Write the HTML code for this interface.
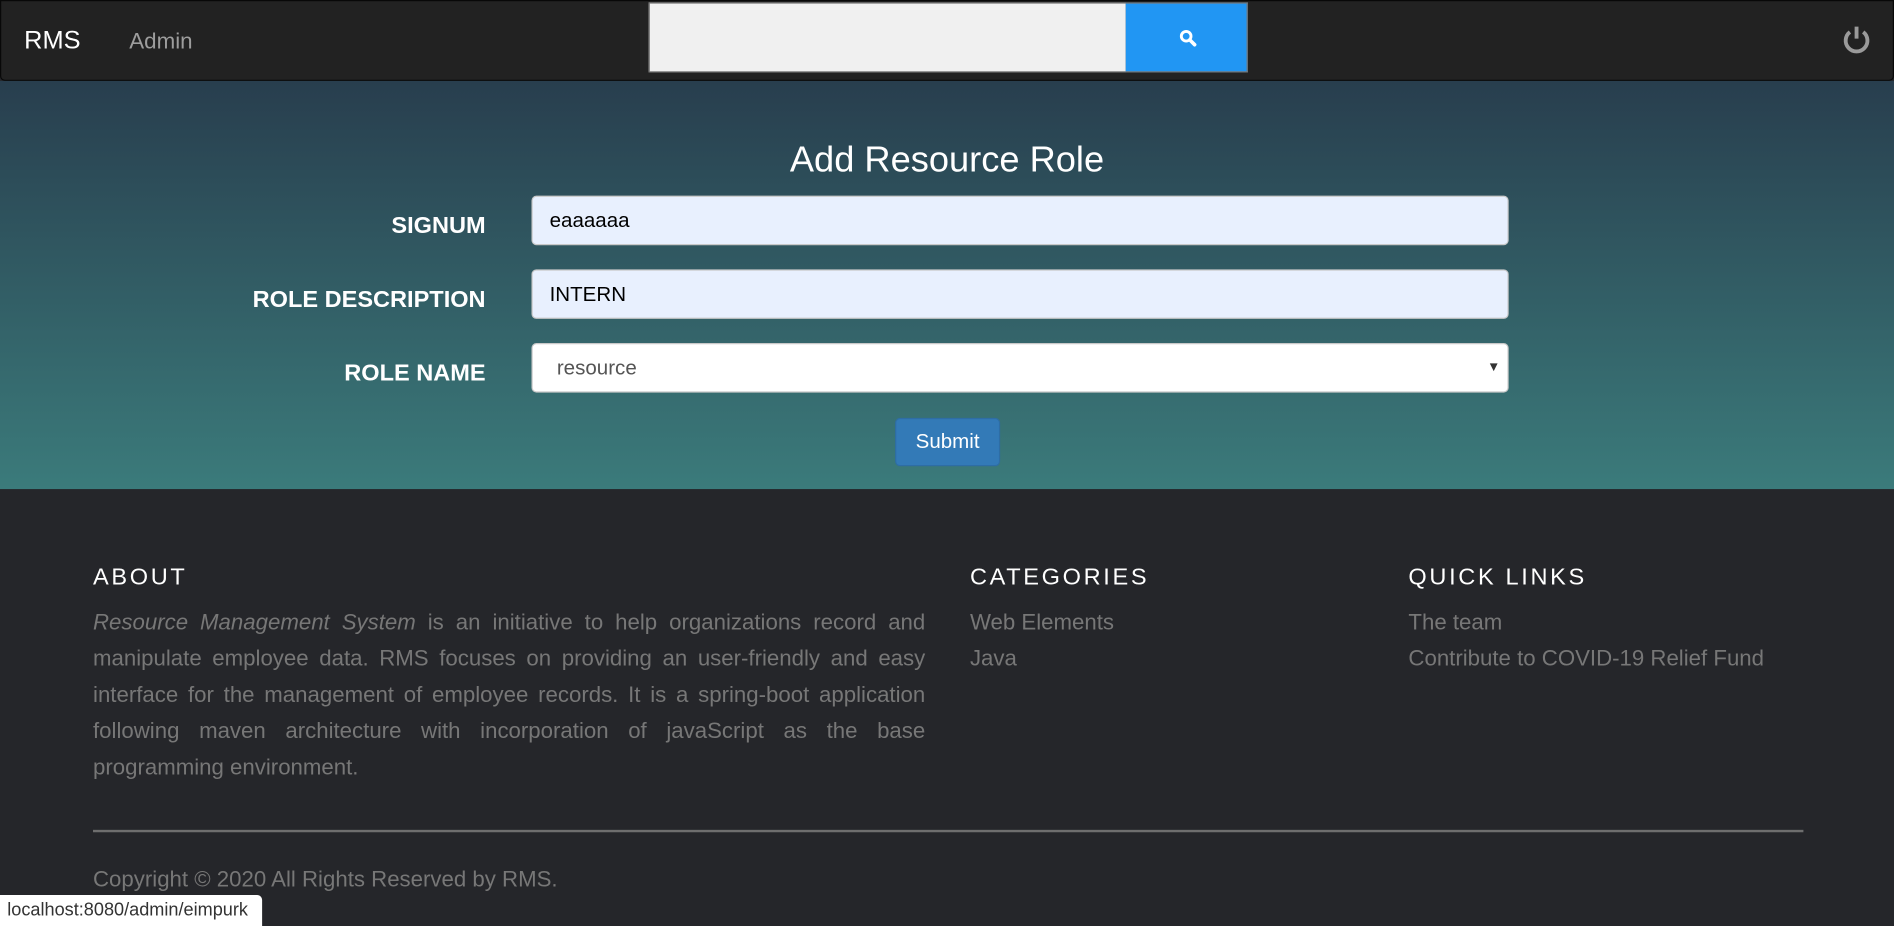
<!DOCTYPE html>
<html><head><meta charset="utf-8"><style>
html,body{margin:0;padding:0;width:1894px;height:926px;overflow:hidden;background:#25262a}
#w{position:absolute;left:0;top:0;width:1568px;height:767px;transform:scale(1.20791);transform-origin:0 0;font-family:"Liberation Sans",Arial,sans-serif;overflow:hidden}
.a{position:absolute}
nav{position:absolute;left:0;top:0;width:1566px;height:65px;background:#222;border:1px solid #080808;border-radius:0 0 4px 4px}
.lbl{position:absolute;right:1166px;width:300px;text-align:right;color:#fff;font-weight:bold;font-size:19.5px}
.inp{position:absolute;left:440px;width:807px;height:39px;background:#e8f0fe;border:1px solid #c8c8c8;border-radius:4px;font-size:17px;color:#000;line-height:39px;box-sizing:content-box}
.ft{color:#fff;font-size:19.5px;letter-spacing:2.2px}
.fl{color:#777;font-size:18.4px;line-height:30px}
</style></head><body><div id="w">
<nav>
<div class="a" style="left:19px;top:21px;color:#fff;font-size:21px">RMS</div>
<div class="a" style="left:106px;top:22px;color:#9d9d9d;font-size:18.5px">Admin</div>
<div class="a" style="left:536px;top:1px;width:394px;height:56px;background:#f0f0f0;border:1px solid #777;border-right:none"></div>
<div class="a" style="left:931px;top:1px;width:100px;height:56px;background:#2196f3;border:1px solid #777;border-left:none"></div>
<svg class="a" style="left:974px;top:22px" width="16" height="16" viewBox="0 0 16 16"><circle cx="7" cy="7" r="4" fill="none" stroke="#fff" stroke-width="2.4"/><path d="M10 10l4 4" stroke="#fff" stroke-width="3" stroke-linecap="round"/></svg>
<svg class="a" style="left:1522px;top:17px" width="28" height="28" viewBox="0 0 28 28"><path d="M8.5 8.5A9 9 0 1 0 19.5 8.5" fill="none" stroke="#9a9a9a" stroke-width="3.2"/><path d="M14 4v10" stroke="#9a9a9a" stroke-width="3.2"/></svg>
</nav>
<div class="a" style="left:0;top:67px;width:1568px;height:338px;background:linear-gradient(#283e4e,#3b7b7b)"></div>
<div class="a" style="left:0;top:116px;width:1568px;text-align:center;color:#fff;font-size:30px">Add Resource Role</div>
<div class="lbl" style="top:176px">SIGNUM</div>
<div class="lbl" style="top:237px">ROLE DESCRIPTION</div>
<div class="lbl" style="top:298px">ROLE NAME</div>
<div class="inp" style="top:162px"><span style="margin-left:14px">eaaaaaa</span></div>
<div class="inp" style="top:223px"><span style="margin-left:14px">INTERN</span></div>
<div class="inp" style="top:284px;background:#fff;color:#555"><span style="margin-left:20px">resource</span><span style="position:absolute;right:6px;top:0;font-size:11px;color:#333">▼</span></div>
<div class="a" style="left:741px;top:346px;width:85px;height:38px;background:#337ab7;border:1px solid #2e6da4;border-radius:4px;color:#fff;font-size:17px;line-height:38px;text-align:center">Submit</div>
<div class="a" style="left:0;top:405px;width:1568px;height:362px;background:#25262a"></div>
<div class="a ft" style="left:77px;top:467px">ABOUT</div>
<div class="a ft" style="left:803px;top:467px">CATEGORIES</div>
<div class="a ft" style="left:1166px;top:467px">QUICK LINKS</div>
<div class="a fl" style="left:77px;top:500px;width:689px;text-align:justify"><i>Resource Management System</i> is an initiative to help organizations record and manipulate employee data. RMS focuses on providing an user-friendly and easy interface for the management of employee records. It is a spring-boot application following maven architecture with incorporation of javaScript as the base programming environment.</div>
<div class="a fl" style="left:803px;top:500px">Web Elements<br>Java</div>
<div class="a fl" style="left:1166px;top:500px">The team<br>Contribute to COVID-19 Relief Fund</div>
<div class="a" style="left:77px;top:687px;width:1416px;height:2px;background:#6e6e6e"></div>
<div class="a fl" style="left:77px;top:713px">Copyright © 2020 All Rights Reserved by RMS.</div>
<div class="a" style="left:0;top:741px;width:217px;height:26px;background:#fff;border-top-right-radius:4px;color:#333;font-size:15px;line-height:26px;padding-left:6px;box-sizing:border-box;white-space:nowrap">localhost:8080/admin/eimpurk</div>
</div></body></html>
